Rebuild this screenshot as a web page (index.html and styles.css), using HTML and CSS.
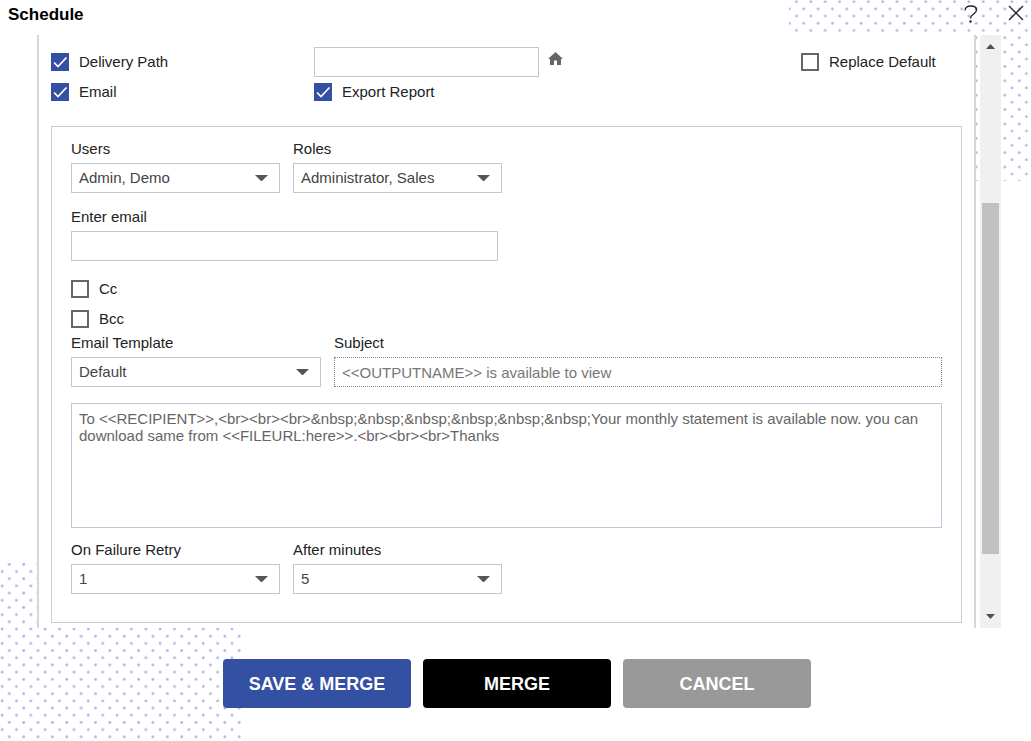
FILE: index.html
```html
<!DOCTYPE html>
<html lang="en">
<head>
<meta charset="utf-8">
<title>Schedule</title>
<link rel="stylesheet" href="styles.css">
</head>
<body>
<svg class="dots dots-top" aria-hidden="true">
  <defs>
    <pattern id="dots-a" width="14.37" height="14.37" patternUnits="userSpaceOnUse" x="0" y="-2">
      <circle cx="7.5" cy="3.7" r="1.4"/><circle cx="0.35" cy="10.9" r="1.4"/><circle cx="14.72" cy="10.9" r="1.4"/>
    </pattern>
  </defs>
  <rect width="100%" height="100%" fill="url(#dots-a)"/>
</svg>
<svg class="dots dots-bottom" aria-hidden="true">
  <defs>
    <pattern id="dots-b" width="14.37" height="14.37" patternUnits="userSpaceOnUse">
      <circle cx="9.3" cy="2.4" r="1.4"/><circle cx="2.1" cy="9.6" r="1.4"/>
    </pattern>
  </defs>
  <rect width="100%" height="100%" fill="url(#dots-b)"/>
</svg>
<main class="dialog">
  <header class="titlebar">
    <h1 class="title">Schedule</h1>
    <div class="titlebar-actions">
      <button class="icon-button" type="button" aria-label="Help">
        <svg width="14" height="18" viewBox="0 0 14 18"><path d="M1 5.500C1 2.500 3.500 1 7 1s5.500 1.500 5.500 4c0 2.200-1.300 3-3.200 4.300C7.500 10.500 6.500 11.200 6.500 13.500" fill="none" stroke="#222" stroke-width="1.300"/><circle cx="6.500" cy="16.500" r="1.200" fill="#222"/></svg>
      </button>
      <button class="icon-button" type="button" aria-label="Close">
        <svg width="16" height="16" viewBox="0 0 16 16"><path d="M1 1l14 14M15 1L1 15" fill="none" stroke="#222" stroke-width="1.300"/></svg>
      </button>
    </div>
  </header>

  <div class="body">
    <form class="panel" id="schedule">
      <div class="options">
        <label class="check"><input type="checkbox" checked>Delivery Path</label>
        <div class="path">
          <input class="field path-input" type="text" aria-label="Delivery path">
          <button class="icon-button home" type="button" aria-label="Home folder">
            <svg width="15" height="14" viewBox="0 0 15 14"><path d="M7.500 0L15 7h-2v6H9V8.500H6V13H2V7H0z" fill="#666"/></svg>
          </button>
        </div>
        <label class="check"><input type="checkbox">Replace Default</label>
        <label class="check"><input type="checkbox" checked>Email</label>
        <label class="check"><input type="checkbox" checked>Export Report</label>
      </div>

      <section class="mail">
        <div class="row">
          <div class="group"><label for="users">Users</label><select class="field" id="users"><option>Admin, Demo</option></select></div>
          <div class="group"><label for="roles">Roles</label><select class="field" id="roles"><option>Administrator, Sales</option></select></div>
        </div>
        <div class="group address"><label for="address">Enter email</label><input class="field" id="address" type="text"></div>
        <div class="copies">
          <label class="check"><input type="checkbox">Cc</label>
          <label class="check"><input type="checkbox">Bcc</label>
        </div>
        <div class="row">
          <div class="group template"><label for="template">Email Template</label><select class="field" id="template"><option>Default</option></select></div>
          <div class="group subject"><label for="subject">Subject</label><input class="field dotted" id="subject" type="text" value="&lt;&lt;OUTPUTNAME&gt;&gt; is available to view" disabled></div>
        </div>
        <textarea class="field message" aria-label="Message">To &lt;&lt;RECIPIENT&gt;&gt;,&lt;br&gt;&lt;br&gt;&lt;br&gt;&amp;nbsp;&amp;nbsp;&amp;nbsp;&amp;nbsp;&amp;nbsp;&amp;nbsp;Your monthly statement is available now. you can download same from &lt;&lt;FILEURL:here&gt;&gt;.&lt;br&gt;&lt;br&gt;&lt;br&gt;Thanks</textarea>
        <div class="row">
          <div class="group"><label for="retry">On Failure Retry</label><select class="field" id="retry"><option>1</option></select></div>
          <div class="group"><label for="minutes">After minutes</label><select class="field" id="minutes"><option>5</option></select></div>
        </div>
      </section>
    </form>
    <div class="scrollbar" aria-hidden="true">
      <svg class="arrow" width="9" height="5" viewBox="0 0 9 5"><path d="M0 5L4.500 0 9 5z"/></svg>
      <div class="track"><div class="thumb"></div></div>
      <svg class="arrow" width="9" height="5" viewBox="0 0 9 5"><path d="M0 0h9L4.500 5z"/></svg>
    </div>
  </div>

  <footer class="footer">
    <button class="button primary" type="submit" form="schedule">SAVE &amp; MERGE</button>
    <button class="button dark" type="button">MERGE</button>
    <button class="button muted" type="button">CANCEL</button>
  </footer>
</main>
</body>
</html>
```
FILE: styles.css
```css
* {
  box-sizing: border-box;
}

body {
  margin: 0;
  position: relative;
  background: #fff;
  color: #222;
  font: 15px/18px "Liberation Sans", Arial, sans-serif;
}

.dots {
  position: absolute;
  fill: #aab6de;
}

.dots-top {
  top: 0;
  right: 0;
  width: 242px;
  height: 181px;
}

.dots-bottom {
  bottom: 0;
  left: 0;
  width: 242px;
  height: 179px;
}

.dialog {
  position: relative;
  display: flex;
  flex-direction: column;
  min-height: 100vh;
}

.titlebar {
  display: flex;
  justify-content: space-between;
  padding: 5px 7px 0 8px;
  height: 35px;
}

.title {
  margin: 0;
  color: #000;
  font-size: 17px;
  line-height: 20px;
}

.titlebar-actions {
  display: flex;
  gap: 30px;
}

.icon-button {
  display: flex;
  padding: 0;
  border: 0;
  background: none;
}

.body {
  display: flex;
  flex: 1;
  gap: 4px;
  margin: 0 30px 0 37px;
}

.panel {
  flex: 1;
  padding: 12px 12px 5px;
  border: solid #d6d6d6;
  border-width: 0 2px;
  background: #fff;
}

.options {
  display: grid;
  grid-template-columns: 263px 1fr 161px;
  align-items: center;
}

.check {
  display: flex;
  align-items: center;
  gap: 10px;
  height: 30px;
}

.check input {
  appearance: none;
  width: 18px;
  height: 18px;
  margin: 0;
  border: 2px solid #666;
  background: #fff;
}

.check input:checked {
  border: 0;
  background: #3450a3 url("data:image/svg+xml,%3Csvg xmlns='http://www.w3.org/2000/svg' width='18' height='18'%3E%3Cpath d='M3 9.500L7 13.500 15.500 4.500' fill='none' stroke='white' stroke-width='1.700'/%3E%3C/svg%3E") center no-repeat;
}

.path {
  display: flex;
  gap: 9px;
}

.path-input {
  flex: 0 1 225px;
}

.home {
  padding-top: 5px;
}

.field {
  width: 100%;
  height: 30px;
  margin: 0;
  padding: 0 7px;
  border: 1px solid #c0c7d6;
  border-radius: 0;
  background: #fff;
  color: #444;
  font: inherit;
}

select.field {
  appearance: none;
  background-image: url("data:image/svg+xml,%3Csvg xmlns='http://www.w3.org/2000/svg' width='13' height='6'%3E%3Cpath d='M0 0H13L6.500 6.500z' fill='%23555'/%3E%3C/svg%3E");
  background-position: right 11px center;
  background-repeat: no-repeat;
}

.mail {
  display: flex;
  flex-direction: column;
  margin-top: 19px;
  padding: 13px 19px 28px;
  border: 1px solid #ccc;
}

.row {
  display: flex;
  gap: 13px;
}

.group {
  display: flex;
  flex-direction: column;
  flex: 0 1 209px;
  gap: 5px;
}

.address {
  flex: none;
  max-width: 427px;
  margin-top: 15px;
}

.copies {
  margin-top: 13px;
}

.template {
  flex-basis: 250px;
}

.subject {
  flex: 1;
}

.dotted {
  border: 1px dotted #888;
  color: #777;
}

.message {
  height: 125px;
  margin: 16px 0 13px;
  padding: 6px 7px;
  color: #666;
  line-height: 17px;
  resize: none;
}

.scrollbar {
  display: flex;
  flex-direction: column;
  align-items: center;
  width: 21px;
  padding: 9px 0;
  background: #f0f0f0;
}

.arrow {
  fill: #505050;
}

.track {
  display: flex;
  flex: 1;
  padding: 154px 0 60px;
}

.thumb {
  width: 17px;
  background: #c1c1c1;
}

.footer {
  display: flex;
  justify-content: center;
  gap: 12px;
  padding: 31px 0 33px 3px;
}

.button {
  width: 188px;
  height: 49px;
  padding: 0;
  border: 0;
  border-radius: 4px;
  color: #fff;
  font: bold 18px/22px "Liberation Sans", Arial, sans-serif;
}

.primary {
  background: #3450a3;
}

.dark {
  background: #000;
}

.muted {
  background: #999;
}
```
